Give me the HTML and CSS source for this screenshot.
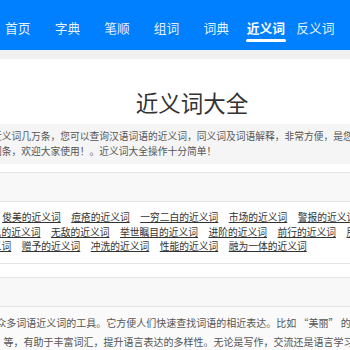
FILE: index.html
```html
<!DOCTYPE html>
<html lang="zh-CN">
<head>
<meta charset="utf-8">
<title>近义词大全</title>
<link rel="stylesheet" href="styles.css">
</head>
<body>
<header class="nav">
  <ul class="nav-list">
    <li class="nav-item">首页</li>
    <li class="nav-item">字典</li>
    <li class="nav-item">笔顺</li>
    <li class="nav-item">组词</li>
    <li class="nav-item">词典</li>
    <li class="nav-item active">近义词</li>
    <li class="nav-item">反义词</li>
    <li class="nav-item">成语</li>
  </ul>
</header>
<main class="main">
  <div class="container">
    <h1 class="title">近义词大全</h1>
    <p class="intro">本站收录近义词几万条，您可以查询汉语词语的近义词，同义词及词语解释，非常方便，是您学习汉语的好帮手。<br>现有近义词条，欢迎大家使用！。近义词大全操作十分简单！</p>

    <section class="panel">
      <div class="panel-head">热门</div>
      <div class="panel-body links">
        <a class="link" href="#">美的近义词</a>
        <a class="link" href="#">俊美的近义词</a>
        <a class="link" href="#">痘疮的近义词</a>
        <a class="link" href="#">一穷二白的近义词</a>
        <a class="link" href="#">市场的近义词</a>
        <a class="link" href="#">警报的近义词</a>
        <a class="link" href="#">温暖的近义词</a>
        <a class="link" href="#">百闻不如一见的近义词</a>
        <a class="link" href="#">无敌的近义词</a>
        <a class="link" href="#">举世瞩目的近义词</a>
        <a class="link" href="#">进阶的近义词</a>
        <a class="link" href="#">前行的近义词</a>
        <a class="link" href="#">朋友的近义词</a>
        <a class="link" href="#">好朋友的近义词</a>
        <a class="link" href="#">赠予的近义词</a>
        <a class="link" href="#">冲洗的近义词</a>
        <a class="link" href="#">性能的近义词</a>
        <a class="link" href="#">融为一体的近义词</a>
      </div>
    </section>

    <section class="panel">
      <div class="panel-head">介绍</div>
      <div class="panel-body text">
        <p class="para">它是收录众多词语近义词的工具。它方便人们快速查找词语的相近表达。比如 “美丽” 的近义词有 “漂亮”<br>、“好看” 等，有助于丰富词汇，提升语言表达的多样性。无论是写作，交流还是语言学习，都能派上用场。</p>
      </div>
    </section>
  </div>
</main>
</body>
</html>
```
FILE: styles.css
```css
html, body {
  margin: 0;
  padding: 0;
}

body {
  background: #f0f0f0;
  font-family: "Noto Sans CJK SC", "Microsoft YaHei", sans-serif;
  overflow: hidden;
  height: 350px;
}

.nav {
  height: 50px;
  background: #0080ff;
}

.nav-list {
  display: flex;
  margin: 0 0 0 -7px;
  padding: 0;
  list-style: none;
}

.nav-item {
  position: relative;
  flex: none;
  width: 49.6px;
  height: 30.5px;
  padding-top: 19.5px;
  font-size: 12.75px;
  line-height: 15px;
  text-align: center;
  white-space: nowrap;
  color: rgba(255, 255, 255, 0.92);
}

.nav-item.active {
  font-weight: bold;
  color: #fff;
}

.nav-item.active::after {
  content: "";
  position: absolute;
  left: 50%;
  top: 39px;
  width: 40px;
  height: 2.5px;
  margin-left: -20px;
  background: #fff;
  border-radius: 2px;
}

.main {
  margin-top: 9px;
  background: #fff;
  min-height: 400px;
}

.container {
  width: 498px;
  margin-left: -57px;
}

.title {
  margin: 0;
  padding: 28px 0 6.5px;
  font-size: 22.5px;
  line-height: 30px;
  font-weight: normal;
  color: #333;
  text-align: center;
}

.intro {
  margin: 0;
  padding: 5.75px 10px;
  background: #f5f5f5;
  font-size: 9.75px;
  line-height: 14.25px;
  color: #555;
  white-space: nowrap;
  overflow: hidden;
}

.panel {
  margin-top: 8px;
  border-top: 1px solid #e5e5e5;
  border-bottom: 1px solid #e5e5e5;
}

.panel + .panel {
  margin-top: 13px;
}

.panel-head {
  height: 28px;
  padding-left: 10px;
  background: #f8f8f8;
  border-bottom: 1px solid #e5e5e5;
  font-size: 12px;
  line-height: 28px;
  color: #333;
}

.links {
  display: flex;
  flex-wrap: wrap;
  column-gap: 10.5px;
  padding: 8.75px 0;
  font-size: 9.75px;
  line-height: 14.5px;
}

.link {
  color: #333;
  text-decoration: underline;
  white-space: nowrap;
}

.text {
  padding: 6.5px 10px 6.5px 13.25px;
  background: #fafafa;
}

.para {
  margin: 0;
  font-size: 10px;
  line-height: 19px;
  color: #555;
  white-space: nowrap;
}
```
